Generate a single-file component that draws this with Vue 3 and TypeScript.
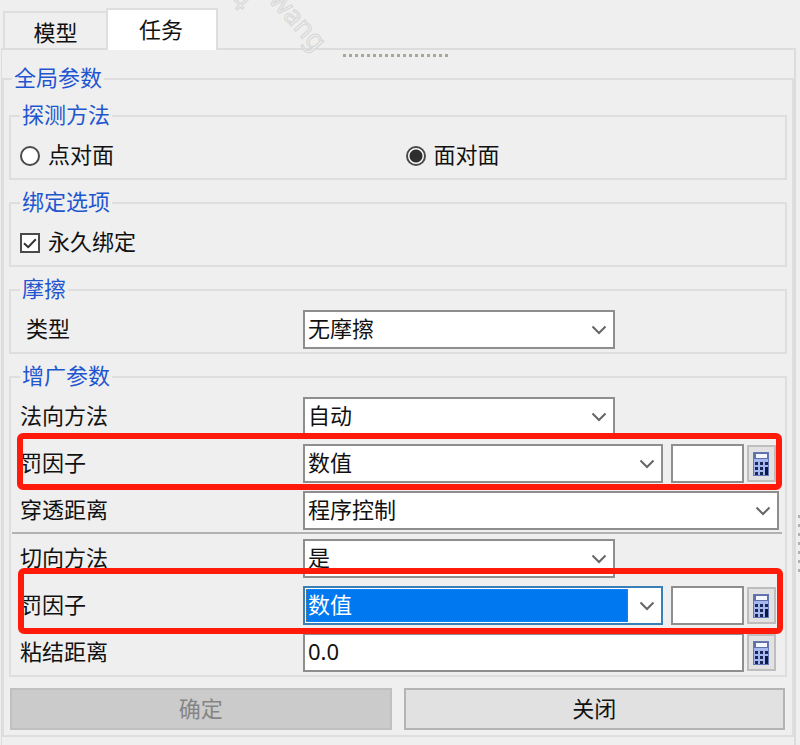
<script setup lang="ts">
import { ref } from 'vue'

interface ParamRow {
  id: string
  label: string
  kind: 'short' | 'combo' | 'wide' | 'text'
  value: string
  options: string[]
  active?: boolean
  mark?: 'upper' | 'lower'
}

const detection = ref('face')
const permanent = ref(true)
const friction = ref('无摩擦')
const amounts = ref<Record<string, string>>({ normalPenalty: '', tangentPenalty: '' })

const groups = ref<ParamRow[][]>([
  [
    { id: 'normalMethod', label: '法向方法', kind: 'short', value: '自动', options: ['自动'] },
    { id: 'normalPenalty', label: '罚因子', kind: 'combo', value: '数值', options: ['数值'], mark: 'upper' },
    { id: 'penetration', label: '穿透距离', kind: 'wide', value: '程序控制', options: ['程序控制'] },
  ],
  [
    { id: 'tangentMethod', label: '切向方法', kind: 'short', value: '是', options: ['是'] },
    { id: 'tangentPenalty', label: '罚因子', kind: 'combo', value: '数值', options: ['数值'], active: true, mark: 'lower' },
    { id: 'bondDistance', label: '粘结距离', kind: 'text', value: '0.0', options: [] },
  ],
])

const keys = [0, 1, 2].flatMap((r) => [0, 1, 2].map((c) => ({ x: 3 + c * 5, y: 11 + r * 5 })))
</script>

<template>
  <div class="window">
    <div class="watermark" aria-hidden="true"><span>4</span><span>wang</span></div>

    <div class="tabs" role="tablist">
      <button class="tab" type="button" role="tab" aria-selected="false">模型</button>
      <button class="tab current" type="button" role="tab" aria-selected="true">任务</button>
    </div>

    <main class="pane">
      <div class="grip" aria-hidden="true"></div>

      <fieldset class="global">
        <legend>全局参数</legend>

        <div class="sections">
          <fieldset class="group">
            <legend>探测方法</legend>
            <div class="choices">
              <label><input v-model="detection" type="radio" name="detection" value="point" /><span>点对面</span></label>
              <label><input v-model="detection" type="radio" name="detection" value="face" /><span>面对面</span></label>
            </div>
          </fieldset>

          <fieldset class="group">
            <legend>绑定选项</legend>
            <div class="choices">
              <label class="check">
                <input v-model="permanent" type="checkbox" />
                <svg v-if="permanent" viewBox="0 0 20 20" aria-hidden="true"><path d="M4 10.2 8.2 14.2l7.6-8" /></svg>
                <span>永久绑定</span>
              </label>
            </div>
          </fieldset>

          <fieldset class="group">
            <legend>摩擦</legend>
            <div class="row">
              <label class="name indent" for="friction">类型</label>
              <div class="select short">
                <select id="friction" v-model="friction"><option>无摩擦</option></select>
                <svg viewBox="0 0 16 10" aria-hidden="true"><path d="M1.5 1.5 8 8l6.5-6.5" /></svg>
              </div>
            </div>
          </fieldset>

          <fieldset class="group">
            <legend>增广参数</legend>
            <template v-for="(rows, g) in groups" :key="g">
              <hr v-if="g > 0" />
              <div class="rows">
                <div v-for="row in rows" :key="row.id" class="row" :class="row.mark && ['marked', row.mark]">
                  <label class="name" :for="row.id">{{ row.label }}</label>
                  <div v-if="row.kind !== 'text'" class="select" :class="[row.kind, { active: row.active }]">
                    <select :id="row.id" v-model="row.value">
                      <option v-for="o in row.options" :key="o">{{ o }}</option>
                    </select>
                    <svg viewBox="0 0 16 10" aria-hidden="true"><path d="M1.5 1.5 8 8l6.5-6.5" /></svg>
                  </div>
                  <input v-else :id="row.id" v-model="row.value" class="field" type="text" />
                  <input
                    v-if="row.kind === 'combo'"
                    v-model="amounts[row.id]"
                    class="field amount"
                    type="text"
                    :aria-label="row.label"
                  />
                  <button v-if="row.kind === 'combo' || row.kind === 'text'" class="calc" type="button" aria-label="计算器">
                    <svg viewBox="0 0 16 24" aria-hidden="true">
                      <rect width="16" height="24" fill="#6377b4" />
                      <rect x="1" y="1" width="14" height="22" fill="#a4b7ee" />
                      <rect x="1" y="1" width="14" height="6" fill="#5f70a8" />
                      <rect x="3" y="2" width="11" height="4" fill="#f4f7ff" />
                      <rect v-for="(k, i) in keys" :key="i" :x="k.x - 1" :y="k.y - 1" width="3" height="3" fill="#1b2658" />
                      <rect x="12" y="15" width="3" height="8" fill="#0b1744" />
                    </svg>
                  </button>
                </div>
              </div>
            </template>
          </fieldset>
        </div>

        <div class="actions">
          <button type="button" disabled>确定</button>
          <button type="button">关闭</button>
        </div>
      </fieldset>
    </main>

    <div class="side-grip" aria-hidden="true"></div>
  </div>
</template>

<style>
body {
  margin: 0;
  background: #efefef;
}
</style>

<style scoped>
* {
  box-sizing: border-box;
}

.window {
  position: relative;
  display: flex;
  flex-direction: column;
  min-height: 100vh;
  padding: 8px 4px 0 1px;
  overflow: hidden;
  background: #efefef;
  color: #111;
  font: 22px/24px "Noto Sans", "Noto Sans CJK SC", sans-serif;
}

button,
input,
select {
  margin: 0;
  border-radius: 0;
  color: inherit;
  font: inherit;
  appearance: none;
}

fieldset {
  min-width: 0;
  margin: 0;
  border: 2px solid #dedede;
}

legend {
  height: 24px;
  padding: 0 2px;
  color: #1f56cf;
  line-height: 20px;
}

/* Tabs */
.tabs {
  position: relative;
  z-index: 1;
  display: flex;
  align-items: flex-end;
  padding-left: 2px;
}

.tab {
  width: 103px;
  height: 37px;
  padding: 2px 0 0;
  border: 2px solid #dedede;
  border-width: 2px 0 0 2px;
  background: #efefef;
}

.tab.current {
  width: 112px;
  height: 42px;
  margin-bottom: -2px;
  padding: 0 2px 2px 0;
  border-width: 2px 2px 0;
  background: #fff;
}

.pane {
  position: relative;
  flex: 1;
  padding: 17px 0 9px;
  border: 2px solid #dcdcdc;
  border-width: 2px 2px 0 1px;
}

.grip {
  position: absolute;
  top: 4px;
  left: 50%;
  width: 108px;
  height: 3px;
  margin-left: -55px;
  background: repeating-linear-gradient(90deg, #a9a797 0 3px, transparent 3px 6px);
}

.side-grip {
  position: absolute;
  top: 515px;
  right: 0;
  width: 2px;
  height: 63px;
  background: repeating-linear-gradient(#b5b3a6 0 3px, transparent 3px 9px);
}

.global {
  padding: 0 5px 5px 5px;
}

.global > legend {
  margin-left: 3px;
}

.sections {
  display: flex;
  flex-direction: column;
  gap: 11px;
  padding-top: 13px;
}

.group {
  padding: 8px 6px 3px 9px;
}

/* Radio buttons and tick box */
.choices {
  display: grid;
  grid-template-columns: 1fr 1fr;
  column-gap: 12px;
  height: 39px;
  align-items: center;
}

.choices label {
  position: relative;
  display: flex;
  align-items: center;
  gap: 8px;
}

.choices span,
.name {
  padding-bottom: 3px;
}

.choices input {
  width: 20px;
  height: 20px;
  border: 2px solid #4a4a4a;
  background: #fff;
}

.choices input[type="radio"] {
  border-radius: 50%;
}

.choices input[type="radio"]:checked {
  background: radial-gradient(circle, #2e2e2e 6px, #fff 7px);
}

.check svg {
  position: absolute;
  left: 0;
  width: 20px;
  height: 20px;
  fill: none;
  stroke: #333;
  stroke-width: 2;
}

/* Parameter rows */
.rows {
  display: flex;
  flex-direction: column;
  gap: 8px;
}

.row {
  position: relative;
  display: flex;
  align-items: center;
}

.name {
  flex: 0 0 283px;
}

.indent {
  padding-left: 6px;
}

.select {
  position: relative;
  flex: 1;
  min-width: 0;
}

.select.short {
  flex: 0 1 312px;
}

.select select,
.field {
  display: block;
  width: 100%;
  height: 39px;
  padding: 0 32px 3px 3px;
  border: 2px solid #8e8e8e;
  outline: 0;
  background: #fff;
}

.select svg {
  position: absolute;
  top: 15px;
  right: 8px;
  width: 16px;
  height: 10px;
  fill: none;
  stroke: #666;
  stroke-width: 2;
  pointer-events: none;
}

.select.active select {
  border-color: #3a80b8;
  background: linear-gradient(#0078f0, #0078f0) 1px 1px / calc(100% - 34px) calc(100% - 2px) no-repeat #fff;
  color: #fff;
}

.select.active::after {
  content: "";
  position: absolute;
  inset: 3px 35px 3px 3px;
  border: 1px dotted #8a7a52;
  pointer-events: none;
}

.field {
  flex: 1;
  min-width: 0;
  padding-right: 3px;
}

.field.amount {
  flex: 0 0 73px;
  margin-left: 8px;
}

.calc {
  display: flex;
  flex: none;
  align-items: center;
  justify-content: center;
  width: 29px;
  height: 37px;
  margin: 0 3px;
  padding: 0 2px 0 0;
  border: 2px solid #bebebe;
  background: #e2e2e2;
}

.calc svg {
  flex: none;
  width: 16px;
  height: 24px;
}

hr {
  height: 2px;
  margin: 2px -3px 5px -8px;
  border: 0;
  background: #b2b2b2;
}

/* Red call-outs around the penalty rows */
.marked::after {
  content: "";
  position: absolute;
  z-index: 2;
  border: 6px solid #ff1a0a;
  border-radius: 6px;
  pointer-events: none;
}

.upper::after {
  inset: -11px -3px -7px;
}

.lower::after {
  inset: -18px -4px -9px -2px;
}

/* Bottom buttons */
.actions {
  display: grid;
  grid-template-columns: 1fr 1fr;
  gap: 12px;
  padding: 11px 2px 0 1px;
}

.actions button {
  height: 42px;
  padding: 0 0 2px;
  border: 2px solid #b4b4b4;
  background: #e1e1e1;
}

.actions button:disabled {
  border-color: #c0c0c0;
  background: #cbcbcb;
  color: #858585;
}

.watermark {
  position: absolute;
  top: -16px;
  left: 225px;
  z-index: 2;
  display: flex;
  color: #efefef;
  font-size: 27px;
  -webkit-text-stroke: 1px #d6d6d6;
  pointer-events: none;
}

.watermark span {
  transform: rotate(48deg);
}

.watermark span + span {
  margin-top: 24px;
  margin-left: 24px;
}
</style>
